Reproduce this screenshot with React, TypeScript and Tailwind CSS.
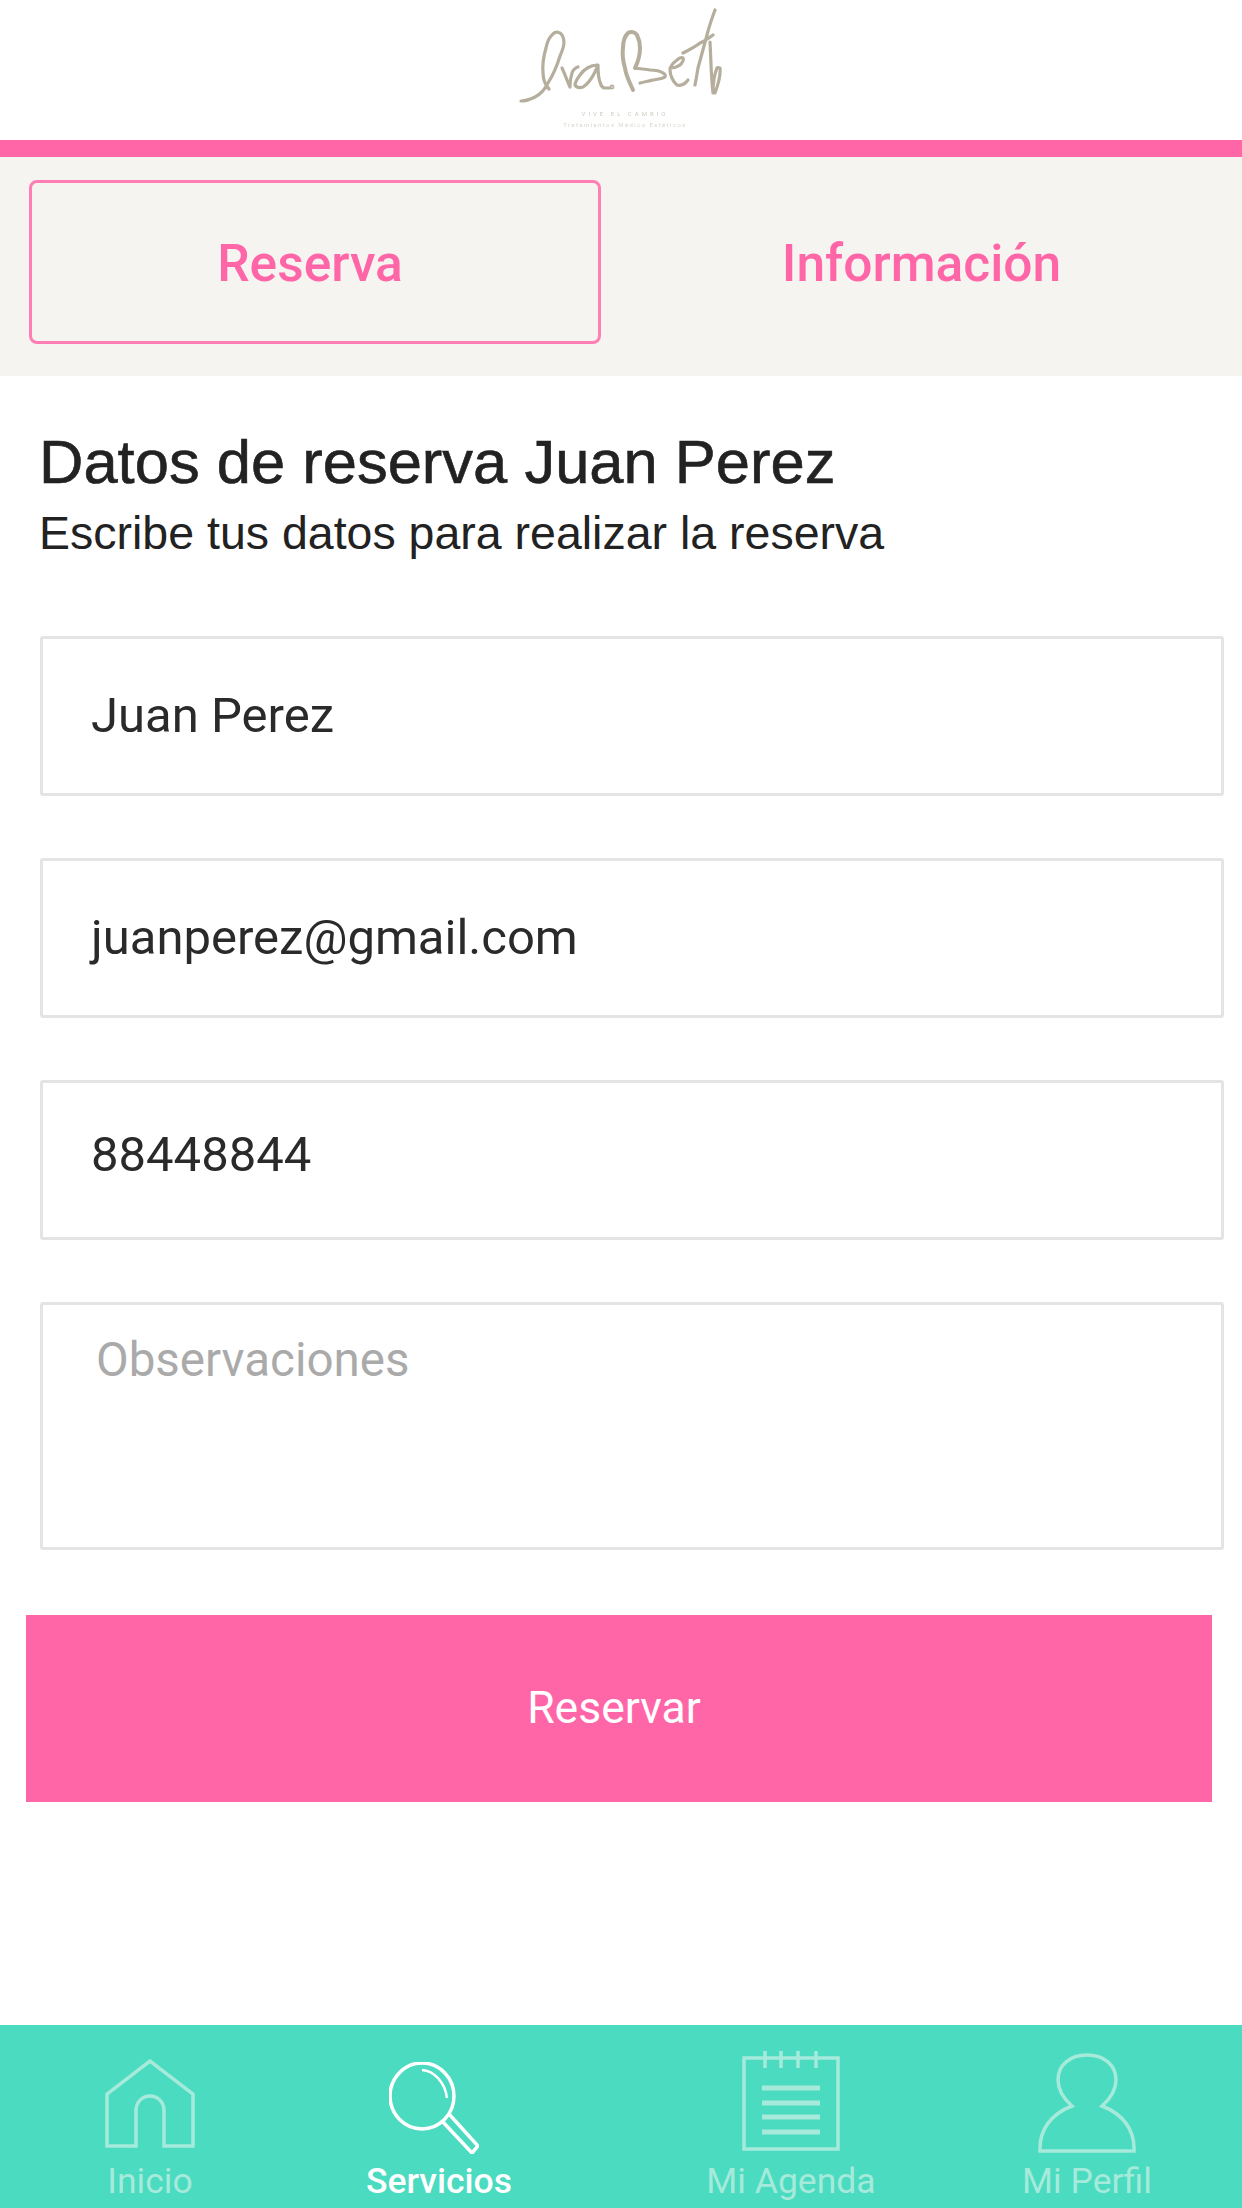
const fields = [
  { value: "Juan Perez", pad: "pb-0" },
  { value: "juanperez@gmail.com", pad: "pb-0" },
  { value: "88448844", pad: "pb-[10px]" },
];

function Logo() {
  return (
    <div className="relative h-[140px] bg-white">
      {/* signature logo, coordinates follow the page pixels */}
      <svg width="215" height="105" viewBox="515 5 215 105" className="absolute left-[515px] top-[5px] blur-[0.6px]" fill="none" stroke="#b5ae9c" strokeWidth="3.2" strokeLinecap="round" strokeLinejoin="round">
        <path d="M521 101c6 0 10-2 14-4 6-3 10-8 13-14 5-8 9-17 12-27 3-7 6-14 2-21-2-3-6-4-9-1-4 3-6 9-7 14-2 7-4 15-3 24 0 6 2 13 6 17" />
        <path d="M562 68c3 6 5 13 8 19 0-6 1-11 2-14 1-3 3-5 6-6" />
        <path d="M597 65c-6 0-13 4-17 10-3 4-5 8-5 10 2 3 5 3 8 2 5-3 9-9 12-15 1-3 3-6 3-7 0 6 0 12 2 17 1 4 3 6 5 6s4 0 5 0" />
        <circle cx="612" cy="87" r="0.8" />
        <path d="M633 90c-3-7-7-14-8-22-2-7-3-14-2-20 0-6 2-12 5-15 3-2 7-1 9 2 2 4 3 9 3 13 0 7-2 14-5 20" strokeWidth="4" />
        <path d="M635 68c5 1 10 1 15 2 5 0 10 1 13 3 2 1 3 3 2 4-3 2-8 2-12 3-4 1-9 2-13 3" />
        <path d="M670 68c4 0 7-1 10-3 2-2 4-5 3-7-2-1-4 0-6 2-4 3-7 7-7 10 0 5 3 12 7 15 4 1 8-1 11-5" />
        <path d="M715 10c-3 8-6 17-8 25-3 11-6 22-9 33-1 6-2 12-3 17M683 53c6-3 12-6 17-10 5-2 9-5 13-8" />
        <path d="M710 42c1 17 1 35 3 51 0-8 1-18 4-25 1-1 2 0 3 0 1 8-2 17-5 25" />
      </svg>
      <p className="absolute left-0 right-0 top-[111px] pl-[8px] text-center font-['Roboto',sans-serif] text-[6px] leading-none tracking-[3px] text-[#cfcbc0] blur-[0.5px]">VIVE EL CAMBIO</p>
      <p className="absolute left-0 right-0 top-[122px] pl-[8px] text-center font-['Roboto',sans-serif] text-[6px] leading-none tracking-[1.4px] text-[#dad7ce] blur-[0.5px]">Tratamientos Médico Estéticos</p>
    </div>
  );
}

function Tabs() {
  return (
    <div className="flex h-[219px] items-start bg-[#f5f4f0] pl-[29px] pt-[23px] font-['Roboto',sans-serif] text-[51.5px] font-medium text-[#ff66a8]">
      <div className="flex h-[164px] w-[572px] items-center justify-center rounded-[8px] border-[3px] border-[#ff7eb4] pr-[10px] pt-[4px]">Reserva</div>
      <div className="flex h-[164px] flex-1 items-center justify-center pt-[4px]">Información</div>
    </div>
  );
}

function NavItem({ label, active, top, children }: { label: string; active?: boolean; top: string; children: React.ReactNode }) {
  return (
    <div className={`flex flex-col items-center ${active ? "text-white" : "text-[#a5eada]"}`}>
      <div className={`h-[136px] ${top}`}>{children}</div>
      <span className={`text-[35.5px] leading-[40px] ${active ? "font-medium" : ""}`}>{label}</span>
    </div>
  );
}

function BottomNav() {
  return (
    <div className="grid h-[183px] grid-cols-[300px_278px_426px_166px] bg-[#4adbc0] font-['Roboto',sans-serif]">
      <NavItem label="Inicio" top="pt-[34px]">
        <svg width="90" height="89" viewBox="0 0 90 89" fill="none" stroke="currentColor" strokeWidth="3.5">
          <path d="M2 87V35L45 2l43 33v52H59V52c0-9-6-15-14-15s-14 6-14 15v35z" />
        </svg>
      </NavItem>
      <NavItem label="Servicios" active top="pt-[37px]">
        <svg width="90" height="92" viewBox="0 0 90 92" fill="none" stroke="currentColor" strokeWidth="3.5" className="mr-[11px]">
          <ellipse cx="33" cy="34" rx="32" ry="33" />
          <path d="M33 8c12 1 23 12 25 28" strokeWidth="2.5" />
          <path d="M53 59l30 32 6-7-29-32" />
        </svg>
      </NavItem>
      <NavItem label="Mi Agenda" top="pt-[26px]">
        <svg width="98" height="100" viewBox="0 0 98 100" fill="none" stroke="currentColor" strokeWidth="3.5">
          <path d="M2 7h94v91H2z" />
          <path d="M23 0v17M39 0v17M56 0v17M74 0v17" />
          <path d="M20 37h58M20 52h58M20 66h58M20 81h58" strokeWidth="5" />
        </svg>
      </NavItem>
      <NavItem label="Mi Perfil" top="pt-[28px]">
        <svg width="98" height="100" viewBox="0 0 98 100" fill="none" stroke="currentColor" strokeWidth="3.5">
          <path d="M34 53c-9-8-14-17-14-26C20 12 32 2 49 2s29 10 29 25c0 9-5 18-14 26 21 8 33 24 32 45H2c-1-21 11-37 32-45z" />
        </svg>
      </NavItem>
    </div>
  );
}

export default function App() {
  return (
    <div className="flex h-[2208px] w-[1242px] flex-col overflow-hidden bg-white">
      <Logo />
      <div className="h-[17px] bg-[#ff66a8]" />
      <Tabs />
      <div className="flex-1 font-['Roboto',sans-serif]">
        <div className="pl-[39px] pt-[52px] font-['Liberation_Sans',sans-serif] text-[#222]">
          <h1 className="text-[61.5px] leading-[68px] font-normal [-webkit-text-stroke:0.6px_#222]">Datos de reserva Juan Perez</h1>
          <p className="mt-[10px] text-[46.5px] leading-[54px]">Escribe tus datos para realizar la reserva</p>
        </div>
        <div className="mt-[76px] flex flex-col gap-[62px] pl-[40px] pr-[18px]">
          {fields.map((field) => (
            <div key={field.value} className={`flex h-[160px] items-center rounded-[3px] border-[3px] border-[#e4e4e4] pl-[48px] text-[49px] text-[#2a2a2a] ${field.pad}`}>{field.value}</div>
          ))}
          <div className="h-[248px] rounded-[3px] border-[3px] border-[#e4e4e4] pl-[53px] pt-[28px] text-[47.5px] leading-[54px] text-[#aaa]">Observaciones</div>
        </div>
        <div className="ml-[26px] mt-[65px] flex h-[187px] w-[1186px] items-center justify-center bg-[#ff66a8] pr-[10px] text-[44.5px] text-white">Reservar</div>
      </div>
      <BottomNav />
    </div>
  );
}
